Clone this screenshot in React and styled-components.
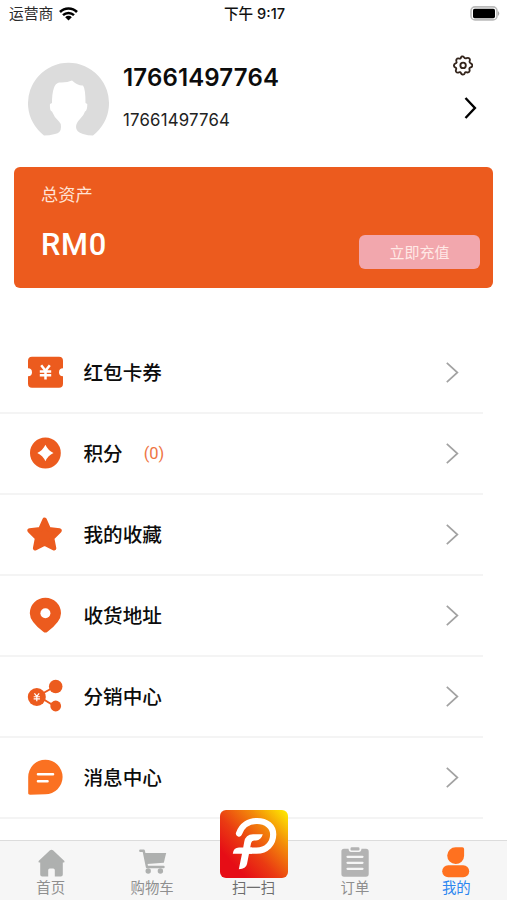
import React from 'react';
import styled, { createGlobalStyle } from 'styled-components';

const GlobalStyle = createGlobalStyle`
* {
  box-sizing: border-box;
}
body {
  margin: 0;
  background: #fff;
  font-family: Inter, "Noto Sans CJK SC", sans-serif;
}
svg {
  display: block;
  flex: none;
}
`;

const Screen = styled.div`
width: 507px;
height: 900px;
display: flex;
flex-direction: column;
overflow: hidden;
background: #fff;
color: #0c0c0c;
`;

const StatusBar = styled.div`
height: 28px;
display: grid;
grid-template-columns: 1fr auto 1fr;
align-items: center;
padding: 0 7px 1px 9px;
font-size: 14.8px;
line-height: 24px;
`;

const Carrier = styled.div`
display: flex;
align-items: center;
gap: 6px;
color: #2b2b2b;
`;

const Clock = styled.div`
font-size: 14.6px;
font-weight: 500;
color: #111;
white-space: pre;
`;

const BatterySlot = styled.div`
justify-self: end;
`;

const Profile = styled.div`
height: 139px;
display: flex;
padding: 0 30px 0 28px;
`;

const AvatarSlot = styled.div`
padding-top: 34px;
`;

const Names = styled.div`
flex: 1;
padding: 35px 0 0 14px;
`;

const UserName = styled.div`
font-size: 24px;
font-weight: 600;
line-height: 30px;
letter-spacing: 0.15px;
`;

const UserPhone = styled.div`
margin-top: 15px;
font-size: 16.8px;
line-height: 24px;
letter-spacing: 0.2px;
color: #222;
`;

const ProfileActions = styled.div`
display: flex;
flex-direction: column;
align-items: flex-end;
padding-top: 27px;
gap: 20px;
`;

const GearSlot = styled.div`
padding-right: 4px;
`;

const AssetCard = styled.div`
height: 121px;
margin: 0 14px;
padding: 16px 13px 19px 27px;
display: flex;
justify-content: space-between;
align-items: flex-end;
border-radius: 6px;
background: #ec5b1e;
color: #fff;
`;

const Assets = styled.div`
align-self: flex-start;
`;

const AssetLabel = styled.div`
font-size: 17.2px;
line-height: 24px;
color: #ffe3d6;
`;

const AssetValue = styled.div`
margin-top: 19px;
font-family: Roboto, sans-serif;
font-size: 30.8px;
font-weight: 500;
line-height: 38px;
letter-spacing: 0.7px;
`;

const RechargeButton = styled.button`
width: 121px;
height: 34px;
padding: 0 0 2px;
border: 0;
border-radius: 6px;
background: #f2a7ad;
color: #ffe9e6;
font: inherit;
font-size: 15px;
`;

const Menu = styled.div`
flex: 1;
min-height: 0;
padding-top: 45px;
overflow: hidden;
`;

const MenuRow = styled.div`
width: 483px;
height: 81px;
padding: 0 24px 0 27px;
display: flex;
align-items: center;
border-bottom: 2px solid #f4f4f4;
`;

const MenuLabel = styled.div`
margin-left: 19.5px;
font-size: 19.6px;
font-weight: 500;
line-height: 30px;
`;

const MenuCount = styled.div`
margin-left: 21px;
font-family: Roboto, sans-serif;
font-size: 16.5px;
color: #ee7544;
`;

const ArrowSlot = styled.div`
margin-left: auto;
`;

const TabBar = styled.div`
height: 60px;
display: grid;
grid-template-columns: repeat(5, 1fr);
border-top: 1px solid #dcdcdc;
background: #f6f6f6;
`;

const Tab = styled.div`
height: 59px;
display: flex;
flex-direction: column;
align-items: center;
justify-content: flex-end;
color: ${props => (props.$active ? '#2d86f0' : '#8f8f8f')};
`;

const TabIcon = styled.div`
padding: 0 0 ${props => props.$lift || 0}px ${props => props.$shift || 0}px;
`;

const TabLabel = styled.div`
font-size: 14.4px;
line-height: 20px;
padding-bottom: 2px;
color: ${props => props.$color || 'inherit'};
`;

const WifiIcon = () => (
  <svg width="19" height="16" viewBox="0 0 19 16">
    <path d="M1 6 A12 12 0 0 1 18 6" fill="none" stroke="#000" strokeWidth="2.6" />
    <path d="M4 9.2 A7.8 7.8 0 0 1 15 9.2" fill="none" stroke="#000" strokeWidth="2.4" />
    <path d="M6.2 11.2 A4.6 4.6 0 0 1 12.8 11.2 L9.5 14.5 Z" fill="#000" />
  </svg>
);

const BatteryIcon = () => (
  <svg width="31" height="15" viewBox="0 0 31 15">
    <rect x="2" y=".9" width="26" height="13" rx="4" fill="#fff" stroke="#bbb" strokeWidth="1.6" />
    <rect x="4" y="2.7" width="22" height="9.5" rx="1.6" fill="#000" />
    <path d="M29 5 Q31.5 7.5 29 10 Z" fill="#aaa" />
  </svg>
);

const Avatar = () => (
  <svg width="81" height="76" viewBox="0 0 81 76">
    <path
      d="M16 73.5 A40.5 40.5 0 1 1 65 73.5 Q60 73.5 55 72 Q48 70 48 65 Q48 61 52 57 Q56 53 57 49.5 Q59.3 49 59.3 42 L57.5 41 Q57.5 27 55 23.5 Q50 24 44 18.5 Q39 21 31 20.5 Q24 22 24 41 L22 42 Q21.5 49 24 49.5 Q26 55 31 59.5 Q33 61 33 65 Q33 71 27 72 Q21 73.5 16 73.5 Z"
      fill="#dcdcdc"
    />
  </svg>
);

const GearIcon = () => (
  <svg width="20" height="21" viewBox="0 0 20.6 21" fill="none" stroke="#33241b" strokeWidth="1.9" strokeLinejoin="round">
    <path d="M9.2 1.2 Q10.5 .8 11.3 2 Q12.4 3.6 14 2.9 Q16.5 2 17.3 4 Q17.6 5 17.1 6.1 Q16.7 7.6 18.3 8.3 Q20 9 19.8 10.7 Q19.6 12 18.2 12.4 Q16.4 13 17 14.7 Q17.6 16.4 16.2 17.4 Q14.9 18.1 13.7 17.4 Q12.4 17 12.1 18.5 Q11.7 20 10 19.9 Q8.7 19.7 8.2 18.4 Q7.6 16.8 6 17.6 Q4.2 18.3 3.2 16.9 Q2.6 15.8 3.2 14.5 Q3.8 13 2.2 12.4 Q.8 11.8 1 10.2 Q1.2 8.9 2.6 8.4 Q4.2 7.8 3.5 6.1 Q3 4.4 4.3 3.4 Q5.4 2.8 6.6 3.4 Q7.9 3.7 8.2 2.3 Q8.4 1.5 9.2 1.2 Z" />
    <circle cx="10.4" cy="10.4" r="2.8" />
  </svg>
);

const ProfileArrow = () => (
  <svg width="13" height="24" viewBox="0 0 13 24" fill="none" stroke="#000" strokeWidth="2.4">
    <path d="M1.5 2 L10.9 12 L1.5 22" />
  </svg>
);

const RowArrow = () => (
  <svg width="13" height="21" viewBox="0 0 13 21" fill="none" stroke="#a2a2a2" strokeWidth="1.7">
    <path d="M.8 .8 L11.4 10.5 L.8 20.2" />
  </svg>
);

const RowIcon = ({ children }) => (
  <svg width="37" height="37" viewBox="0 0 37 37" fill="#ec5b1e">
    {children}
  </svg>
);

const Yen = ({ x, y, scale, width }) => (
  <path
    transform={`translate(${x} ${y}) scale(${scale})`}
    d="M-4.3 -7 L0 -1.5 L4.3 -7 M0 -1.5 V7.3 M-5.7 -.8 H5.7 M-5.7 3 H5.7"
    fill="none"
    stroke="#fff"
    strokeWidth={width}
  />
);

const CouponIcon = () => (
  <RowIcon>
    <rect x="1" y="2.7" width="35" height="31" rx="4" />
    <circle cx="1" cy="18.3" r="4" fill="#fff" />
    <circle cx="36" cy="18.3" r="4" fill="#fff" />
    <Yen x={18.5} y={18.3} scale={1} width={2.5} />
  </RowIcon>
);

const PointsIcon = () => (
  <RowIcon>
    <circle cx="18.4" cy="18" r="15.4" />
    <path d="M18.4 9.8 Q21 15.5 26.5 18 Q21 20.5 18.4 26.2 Q15.8 20.5 10.3 18 Q15.8 15.5 18.4 9.8 Z" fill="#fff" />
  </RowIcon>
);

const StarIcon = () => (
  <RowIcon>
    <path
      d="M17.6 3.8 L21.7 13.2 L32.5 14.5 L25 22 L27 32.2 L17.6 27.4 L8.2 32.2 L10.2 22 L2.7 14.5 L13.5 13.2 Z"
      stroke="#ec5b1e"
      strokeWidth="4.6"
      strokeLinejoin="round"
    />
  </RowIcon>
);

const PinIcon = () => (
  <RowIcon>
    <path d="M18.4 .7 A15.6 15.6 0 0 1 34 16.3 Q34 24.7 20.5 34.7 Q18.4 36.4 16.3 34.7 Q2.8 24.7 2.8 16.3 A15.6 15.6 0 0 1 18.4 .7 Z" />
    <circle cx="18.4" cy="16.3" r="5" fill="#fff" />
  </RowIcon>
);

const ShareIcon = () => (
  <RowIcon>
    <path d="M11 18 L29 8 M11 18 L29 29" stroke="#ec5b1e" strokeWidth="2" />
    <circle cx="9.8" cy="19" r="9" />
    <circle cx="28.7" cy="8.5" r="6.8" />
    <circle cx="28.7" cy="28" r="5.4" />
    <Yen x={9.8} y={19.2} scale={0.55} width={2.2} />
  </RowIcon>
);

const MessageIcon = () => (
  <RowIcon>
    <path d="M18.3 .7 A17.3 17.3 0 1 1 18.3 35.3 L3 35.7 Q.8 35.7 1.2 33.7 V18 A17.3 17.3 0 0 1 18.3 .7 Z" fill="#fb7121" />
    <path d="M11 15.2 H26 M11 22.2 H20.5" stroke="#fff" strokeWidth="2.6" strokeLinecap="round" />
  </RowIcon>
);

const HomeIcon = () => (
  <svg width="27" height="28" viewBox="0 0 27 28" fill="#aeb0af">
    <path d="M12 1.3 Q13.5 .1 15 1.3 L26.4 12 Q27 13.6 25.5 13.6 H24.8 V25.5 Q24.8 27.4 22.8 27.4 H16.8 V21 Q16.8 19.4 15.2 19.4 H11.8 Q10.2 19.4 10.2 21 V27.4 H4.2 Q2.2 27.4 2.2 25.5 V13.6 H1.5 Q0 13.6 .6 12 Z" />
  </svg>
);

const CartIcon = () => (
  <svg width="28" height="27" viewBox="0 0 28 27" fill="#aeb0af">
    <path d="M1.3 2.7 H4.7 L8 19 H24.5" fill="none" stroke="#aeb0af" strokeWidth="2.4" strokeLinecap="round" strokeLinejoin="round" />
    <path d="M5.5 5 H27.2 L24.8 14.8 L8 16 Z" />
    <circle cx="9.2" cy="23" r="2.7" />
    <circle cx="21.4" cy="23" r="2.7" />
  </svg>
);

const ScanLogo = () => (
  <svg width="68" height="68" viewBox="0 0 68 68">
    <defs>
      <linearGradient id="scan" x1=".18" y1=".78" x2="1" y2="0">
        <stop offset="0" stopColor="#e60d16" />
        <stop offset=".3" stopColor="#ea3b12" />
        <stop offset=".65" stopColor="#f38b0a" />
        <stop offset="1" stopColor="#fff000" />
      </linearGradient>
    </defs>
    <rect width="68" height="68" rx="6" fill="url(#scan)" />
    <path
      d="M19 23.5 C22 15 29 11 37 11 C46.5 11 53.2 16.5 53.2 24.5 C53.2 33.5 46.5 40.6 36.5 40.6 H28"
      fill="none"
      stroke="#fff"
      strokeWidth="6.2"
      strokeLinecap="round"
    />
    <path
      d="M42.8 24.3 Q41 30.4 36 30.4 H34 Q31.6 30.4 31.1 33 L30.2 37.6 H32 V43.7 H29 L27 54 Q26 58.8 18.8 59.3 L22 43.7 H12.8 Q13.5 37.6 19 37.6 H23.2 L24.2 32 Q25.5 24.3 33 24.3 Z"
      fill="#fff"
    />
  </svg>
);

const OrderIcon = () => (
  <svg width="28" height="30" viewBox="0 0 28 30" fill="#b3b3b3">
    <path d="M3 1.8 H7.5 Q8 5 10 5 H18 Q20 5 20.5 1.8 H25 Q27.7 1.8 27.7 4.5 V27 Q27.7 29.8 25 29.8 H3 Q.4 29.8 .4 27 V4.5 Q.4 1.8 3 1.8 Z" />
    <rect x="9.5" y=".2" width="9" height="3.2" rx="1.2" />
    <path d="M6.5 9.8 H21.5 M6.5 15.8 H21.5 M6.5 21.8 H21.5" stroke="#f6f6f6" strokeWidth="2.2" strokeLinecap="round" />
  </svg>
);

const MineIcon = () => (
  <svg width="28" height="31" viewBox="0 0 28 31" fill="#ff711f">
    <path d="M13.7 .2 H20.3 Q22.1 .2 22.1 2 V8.7 A8.45 8.45 0 1 1 13.7 .2 Z" />
    <rect x=".2" y="18.3" width="27" height="12" rx="6" />
  </svg>
);

const rows = [
  { label: '红包卡券', icon: CouponIcon },
  { label: '积分', icon: PointsIcon, count: '(0)' },
  { label: '我的收藏', icon: StarIcon },
  { label: '收货地址', icon: PinIcon },
  { label: '分销中心', icon: ShareIcon },
  { label: '消息中心', icon: MessageIcon },
];

const tabs = [
  { label: '首页', icon: HomeIcon, lift: 1, shift: 1 },
  { label: '购物车', icon: CartIcon, lift: 3, shift: 1 },
  { label: '扫一扫', icon: ScanLogo, color: '#6d6d6d', shift: 1 },
  { label: '订单', icon: OrderIcon, lift: 1 },
  { label: '我的', icon: MineIcon, active: true },
];

class App extends React.Component {
  render() {
    return (
      <Screen>
        <GlobalStyle />

        <StatusBar>
          <Carrier>运营商<WifiIcon /></Carrier>
          <Clock>下午 9:17</Clock>
          <BatterySlot><BatteryIcon /></BatterySlot>
        </StatusBar>

        <Profile>
          <AvatarSlot><Avatar /></AvatarSlot>
          <Names>
            <UserName>17661497764</UserName>
            <UserPhone>17661497764</UserPhone>
          </Names>
          <ProfileActions>
            <GearSlot><GearIcon /></GearSlot>
            <ProfileArrow />
          </ProfileActions>
        </Profile>

        <AssetCard>
          <Assets>
            <AssetLabel>总资产</AssetLabel>
            <AssetValue>RM0</AssetValue>
          </Assets>
          <RechargeButton>立即充值</RechargeButton>
        </AssetCard>

        <Menu>
          {rows.map(({ label, icon: Icon, count }) => (
            <MenuRow key={label}>
              <Icon />
              <MenuLabel>{label}</MenuLabel>
              {count && <MenuCount>{count}</MenuCount>}
              <ArrowSlot><RowArrow /></ArrowSlot>
            </MenuRow>
          ))}
        </Menu>

        <TabBar>
          {tabs.map(({ label, icon: Icon, active, color, lift, shift }) => (
            <Tab key={label} $active={active}>
              <TabIcon $lift={lift} $shift={shift}><Icon /></TabIcon>
              <TabLabel $color={color}>{label}</TabLabel>
            </Tab>
          ))}
        </TabBar>
      </Screen>
    );
  }
}

export default App;
